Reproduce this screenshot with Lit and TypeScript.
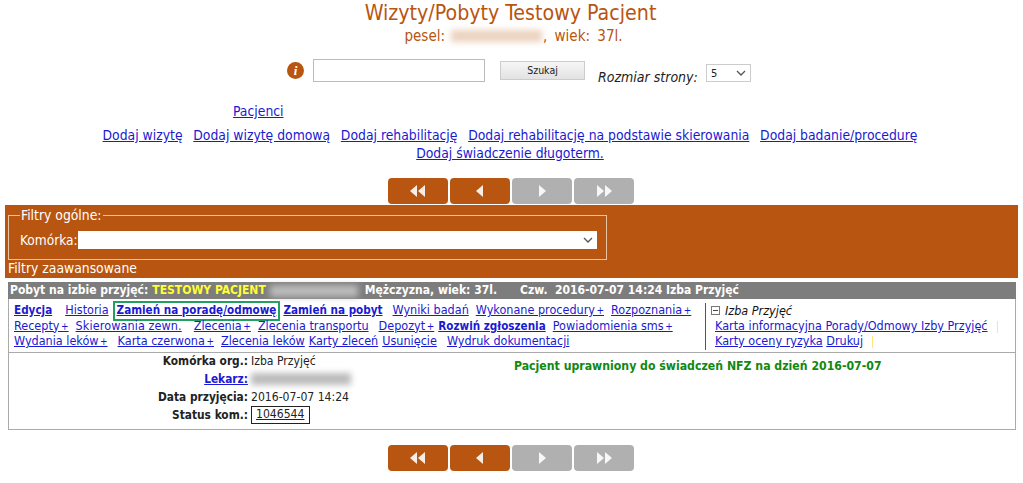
import { LitElement, html, css, svg } from "lit";
import { customElement } from "lit/decorators.js";

const chev = (dir: number, n: number) => {
  const pts = n === 2 ? [0, 8] : [4];
  return svg`<svg class="ico" viewBox="0 0 18 14" width="18" height="14">${pts.map((o) =>
    dir < 0
      ? svg`<path d="M${o + 8} 1 L${o + 1} 7 L${o + 8} 13 Z" fill="#fff" fill-opacity=".9"/>`
      : svg`<path d="M${o + 2} 1 L${o + 9} 7 L${o + 2} 13 Z" fill="#fff" fill-opacity=".9"/>`
  )}</svg>`;
};

@customElement("app-root")
export class AppRoot extends LitElement {
  static styles = css`
    :host { display: block; width: 1023px; height: 483px; overflow: hidden; background: #fff;
      font-family: "DejaVu Sans", Verdana, sans-serif; font-stretch: condensed; font-size: 12px; color: #222; }
    a { color: #1a1ad2; text-decoration: underline; }
    .head { display: flex; flex-direction: column; align-items: center; color: #b85510; padding-right: 2px; }
    .title { font-size: 21.2px; line-height: 26px; }
    .sub { font-size: 15px; line-height: 20px; display: flex; align-items: center; padding-left: 6px; word-spacing: 3px; }
    .blur { display: inline-block; background: #b8551044; filter: blur(3px); }
    .pesel { width: 91px; height: 12px; margin: 0 1px 0 6px; }
    .search { display: flex; height: 30px; margin-top: 13px; }
    .info { width: 17px; height: 17px; border-radius: 50%; background: #b85510; color: #fff; margin: 3px 9px 0 287px;
      font: italic bold 13px/17px "Liberation Serif", serif; text-align: center; }
    .inp { width: 170px; height: 21px; border: 1px solid #bbb; background: #fff; }
    .btn { width: 83px; height: 17px; margin: 2px 0 0 15px; border: 1px solid #ccc; background: linear-gradient(#f6f6f6, #e2e2e2);
      font-size: 10.5px; line-height: 17px; text-align: center; }
    .size { font-style: italic; font-size: 14px; margin: 9px 0 0 13px; width: 108px; line-height: 18px; white-space: nowrap; }
    .sel { width: 35px; height: 16px; margin-top: 5px; border: 1px solid #ccc; display: flex; justify-content: space-between;
      align-items: center; padding: 0 4px; box-sizing: content-box; font-size: 11px; }
    .sel svg, .selwide svg { display: block; }
    .pac { margin: 13px 0 0 233px; font-size: 13.8px; line-height: 18px; }
    .links { width: 1020px; margin-top: 6px; text-align: center; font-size: 13.8px; line-height: 18px; }
    .links a { margin: 0 3.4px; }
    .nav { display: flex; justify-content: center; gap: 2px; height: 26px; margin-right: 1px; }
    .nav1 { margin-top: 16px; }
    .nav2 { margin-top: 15px; }
    .nb { width: 60px; height: 26px; border-radius: 4px; display: flex; align-items: center; justify-content: center; background: #b85510; box-sizing: border-box; }
    .nb.off { background: #b0b0b0; }
    .ico { display: block; }
    .band { margin: 1px 5px 0 5px; height: 73px; background: #b85510; color: #fff; box-sizing: border-box; padding-top: 2px; }
    fieldset { margin: 0 0 0 3px; padding: 0 9px 0 11px; width: 599px; height: 53px; box-sizing: border-box; border: 1px solid #e8c4a4; display: flex; }
    legend { font-size: 13.8px; padding: 0 1px; margin-left: 0; line-height: 16px; }
    .frow { display: flex; align-items: center; font-size: 13.6px; height: 18px; margin-top: 8px; width: 100%; white-space: nowrap; }
    .selwide { flex: 1; height: 18px; background: #fff; display: flex; justify-content: flex-end; align-items: center; padding-right: 4px; box-sizing: border-box; }
    .adv { margin: 0 0 0 3px; font-size: 13.8px; line-height: 17px; }
    .card { margin: 4px 7px 0 8px; height: 148px; border: 1px solid #aaa; box-sizing: border-box; border-top: 0; }
    .chead { height: 17px; background: #7d7d7d; color: #fff; font-weight: bold; font-size: 12px; line-height: 17px; padding-left: 2px; margin-left: -1px; margin-right: -1px; display: flex; white-space: nowrap; }
    .chead .y { color: #ffff33; margin-left: 4px; }
    .chead .nm { width: 88px; height: 12px; background: #bbb; margin: 3px 7px 0 4px; }
    .chead .d { margin-left: 23px; }
    .menus { display: flex; height: 54px; border-bottom: 1px solid #aaa; box-sizing: border-box; }
    .ml { width: 697px; height: 47px; margin-top: 4px; border-right: 1px solid #555; padding-left: 5px; box-sizing: border-box; font-size: 12.5px; line-height: 14.5px; }
    .row { display: flex; white-space: nowrap; }
    .row a { margin-right: 7px; }
    .row a.b { font-weight: bold; font-size: 11.6px; }
    .row a.w { margin-right: 12px; }
    .row a.e { margin-right: 13px; }
    .row a.m10 { margin-right: 10px; }
    .row a.n { margin-right: 4px; }
    .row a.h { margin-right: 6px; }
    .row a.wide { letter-spacing: .1px; }
    .row a.hl { outline: 2px solid #22a060; padding: 0 2px; margin-right: 5px; }
    .plus { font-size: 10px; margin-left: -2px; }
    .mr { padding: 4px 0 0 5px; font-size: 12.5px; line-height: 15px; }
    .mr .i { font-style: italic; display: flex; align-items: center; gap: 5px; color: #111; }
    .mr .bx { width: 7px; height: 7px; border: 1px solid #777; display: flex; align-items: center; justify-content: center; }
    .mr .bx i { display: block; width: 5px; height: 1px; background: #444; }
    .mr .t { padding-left: 4px; white-space: nowrap; }
    .mark { display: inline-block; width: 1px; height: 12px; background: #ffe680; margin-left: 9px; vertical-align: middle; }
    .body { display: flex; }
    .det { width: 343px; display: grid; grid-template-columns: 239px auto; column-gap: 3px; margin-top: -1px; font-size: 12.1px; line-height: 18px; align-items: center; }
    .det .k { font-weight: bold; font-size: 11.8px; text-align: right; }
    .docb { width: 100px; height: 12px; background: #bbb; display: block; }
    .status { border: 1px solid #222; width: 53px; height: 16px; line-height: 15px; padding-left: 4px; text-decoration: underline; }
    .nfz { color: #118811; font-weight: bold; font-size: 12.2px; margin: 6px 0 0 162px; white-space: nowrap; }
  `;

  private navBar(cls: string) {
    return html`<div class="nav ${cls}">
      <div class="nb">${chev(-1, 2)}</div><div class="nb">${chev(-1, 1)}</div>
      <div class="nb off">${chev(1, 1)}</div><div class="nb off">${chev(1, 2)}</div>
    </div>`;
  }

  private caret() {
    return html`<svg width="10" height="6" viewBox="0 0 10 6"><path d="M1 1 L5 5 L9 1" fill="none" stroke="#555" stroke-width="1.3"/></svg>`;
  }

  render() {
    return html`
      <div class="head">
        <div class="title">Wizyty/Pobyty Testowy Pacjent</div>
        <div class="sub">pesel:<span class="blur pesel"></span>, wiek: 37l.</div>
      </div>
      <div class="search">
        <div class="info">i</div>
        <div class="inp"></div>
        <div class="btn">Szukaj</div>
        <div class="size">Rozmiar strony:</div>
        <div class="sel"><span>5</span>${this.caret()}</div>
      </div>
      <div class="pac"><a href="#">Pacjenci</a></div>
      <div class="links">
        <a href="#">Dodaj wizytę</a> <a href="#">Dodaj wizytę domową</a> <a href="#">Dodaj rehabilitację</a>
        <a href="#">Dodaj rehabilitację na podstawie skierowania</a> <a href="#">Dodaj badanie/procedurę</a><br />
        <a href="#">Dodaj świadczenie długoterm.</a>
      </div>
      ${this.navBar("nav1")}
      <div class="band">
        <fieldset>
          <legend>Filtry ogólne:</legend>
          <div class="frow">Komórka:<div class="selwide">${this.caret()}</div></div>
        </fieldset>
        <div class="adv">Filtry zaawansowane</div>
      </div>
      <div class="card">
        <div class="chead">Pobyt na izbie przyjęć:<span class="y">TESTOWY PACJENT</span><span class="blur nm"></span>Mężczyzna, wiek: 37l.<span class="d">Czw.&nbsp; 2016-07-07 14:24 Izba Przyjęć</span></div>
        <div class="menus">
          <div class="ml">
            <div class="row"><a class="b e" href="#">Edycja</a><a class="h" href="#">Historia</a><a class="b hl" href="#">Zamień na poradę/odmowę</a><a class="b m10" href="#">Zamień na pobyt</a><a href="#">Wyniki badań</a><a href="#">Wykonane procedury <span class="plus">+</span></a><a href="#">Rozpoznania <span class="plus">+</span></a></div>
            <div class="row"><a href="#">Recepty <span class="plus">+</span></a><a class="w wide" href="#">Skierowania zewn.</a><a href="#">Zlecenia <span class="plus">+</span></a><a class="m10" href="#">Zlecenia transportu</a><a class="n" href="#">Depozyt <span class="plus">+</span></a><a href="#" class="b">Rozwiń zgłoszenia</a><a href="#">Powiadomienia sms <span class="plus">+</span></a></div>
            <div class="row"><a class="m10" href="#">Wydania leków <span class="plus">+</span></a><a href="#">Karta czerwona <span class="plus">+</span></a><a class="n" href="#">Zlecenia leków</a><a class="n" href="#">Karty zleceń</a><a class="m10" href="#">Usunięcie</a><a href="#">Wydruk dokumentacji</a></div>
          </div>
          <div class="mr">
            <div class="i"><span class="bx"><i></i></span>Izba Przyjęć</div>
            <div class="t"><a href="#">Karta informacyjna Porady/Odmowy Izby Przyjęć</a><span class="mark"></span></div>
            <div class="t"><a href="#">Karty oceny ryzyka</a> <a href="#">Drukuj</a><span class="mark"></span></div>
          </div>
        </div>
        <div class="body">
          <div class="det">
            <div class="k">Komórka org.:</div><div>Izba Przyjęć</div>
            <div class="k"><a href="#">Lekarz:</a></div><div><span class="blur docb"></span></div>
            <div class="k">Data przyjęcia:</div><div>2016-07-07 14:24</div>
            <div class="k">Status kom.:</div><div class="status">1046544</div>
          </div>
          <div class="nfz">Pacjent uprawniony do świadczeń NFZ na dzień 2016-07-07</div>
        </div>
      </div>
      ${this.navBar("nav2")}
    `;
  }
}
